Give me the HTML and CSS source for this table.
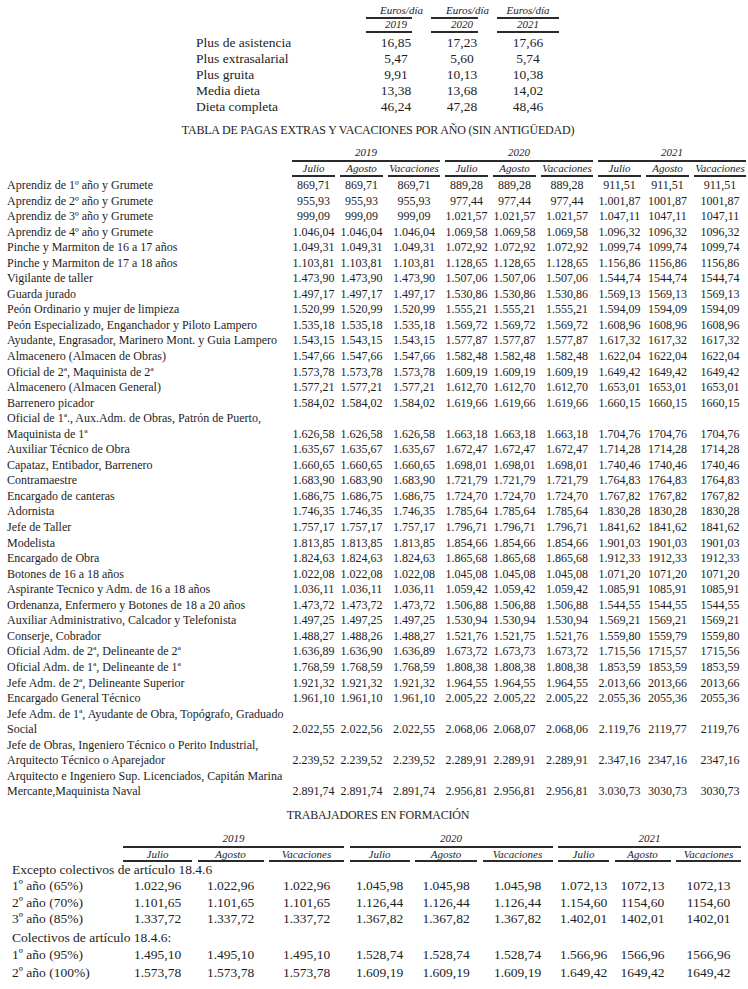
FILE: index.html
```html
<!DOCTYPE html>
<html lang="es">
<head>
<meta charset="utf-8">
<title>Tablas salariales</title>
<link rel="stylesheet" href="styles.css">
</head>
<body>
<div class="page">

  <div class="plus">
    <span></span><span class="hd a c1">Euros/día</span><span class="hd a c2">Euros/día</span><span class="hd a c3">Euros/día</span>
    <span></span><span class="hd b c1">2019</span><span class="hd b c2">2020</span><span class="hd b c3">2021</span>
    <span class="l first">Plus de asistencia</span><span class="c1 first">16,85</span><span class="c2 first">17,23</span><span class="c3 first">17,66</span>
    <span class="l">Plus extrasalarial</span><span class="c1">5,47</span><span class="c2">5,60</span><span class="c3">5,74</span>
    <span class="l">Plus gruita</span><span class="c1">9,91</span><span class="c2">10,13</span><span class="c3">10,38</span>
    <span class="l">Media dieta</span><span class="c1">13,38</span><span class="c2">13,68</span><span class="c3">14,02</span>
    <span class="l">Dieta completa</span><span class="c1">46,24</span><span class="c2">47,28</span><span class="c3">48,46</span>
  </div>

  <h2 class="title">TABLA DE PAGAS EXTRAS Y VACACIONES POR AÑO (SIN ANTIGÜEDAD)</h2>

  <div class="pagas">
    <div class="row yrs"><span></span><span class="yr">2019</span><span class="yr">2020</span><span class="yr">2021</span></div>
    <div class="row subs"><span></span><span class="sh">Julio</span><span class="sh">Agosto</span><span class="sh">Vacaciones</span><span class="sh">Julio</span><span class="sh">Agosto</span><span class="sh">Vacaciones</span><span class="sh">Julio</span><span class="sh">Agosto</span><span class="sh">Vacaciones</span></div>
    <div class="body">
      <div class="row"><span class="l">Aprendiz de 1º año y Grumete</span><span>869,71</span><span>869,71</span><span>869,71</span><span>889,28</span><span>889,28</span><span>889,28</span><span>911,51</span><span>911,51</span><span>911,51</span></div>
      <div class="row"><span class="l">Aprendiz de 2º año y Grumete</span><span>955,93</span><span>955,93</span><span>955,93</span><span>977,44</span><span>977,44</span><span>977,44</span><span>1.001,87</span><span>1001,87</span><span>1001,87</span></div>
      <div class="row"><span class="l">Aprendiz de 3º año y Grumete</span><span>999,09</span><span>999,09</span><span>999,09</span><span>1.021,57</span><span>1.021,57</span><span>1.021,57</span><span>1.047,11</span><span>1047,11</span><span>1047,11</span></div>
      <div class="row"><span class="l">Aprendiz de 4º año y Grumete</span><span>1.046,04</span><span>1.046,04</span><span>1.046,04</span><span>1.069,58</span><span>1.069,58</span><span>1.069,58</span><span>1.096,32</span><span>1096,32</span><span>1096,32</span></div>
      <div class="row"><span class="l">Pinche y Marmiton de 16 a 17 años</span><span>1.049,31</span><span>1.049,31</span><span>1.049,31</span><span>1.072,92</span><span>1.072,92</span><span>1.072,92</span><span>1.099,74</span><span>1099,74</span><span>1099,74</span></div>
      <div class="row"><span class="l">Pinche y Marmiton de 17 a 18 años</span><span>1.103,81</span><span>1.103,81</span><span>1.103,81</span><span>1.128,65</span><span>1.128,65</span><span>1.128,65</span><span>1.156,86</span><span>1156,86</span><span>1156,86</span></div>
      <div class="row"><span class="l">Vigilante de taller</span><span>1.473,90</span><span>1.473,90</span><span>1.473,90</span><span>1.507,06</span><span>1.507,06</span><span>1.507,06</span><span>1.544,74</span><span>1544,74</span><span>1544,74</span></div>
      <div class="row"><span class="l">Guarda jurado</span><span>1.497,17</span><span>1.497,17</span><span>1.497,17</span><span>1.530,86</span><span>1.530,86</span><span>1.530,86</span><span>1.569,13</span><span>1569,13</span><span>1569,13</span></div>
      <div class="row"><span class="l">Peón Ordinario y mujer de limpieza</span><span>1.520,99</span><span>1.520,99</span><span>1.520,99</span><span>1.555,21</span><span>1.555,21</span><span>1.555,21</span><span>1.594,09</span><span>1594,09</span><span>1594,09</span></div>
      <div class="row"><span class="l">Peón Especializado, Enganchador y Piloto Lampero</span><span>1.535,18</span><span>1.535,18</span><span>1.535,18</span><span>1.569,72</span><span>1.569,72</span><span>1.569,72</span><span>1.608,96</span><span>1608,96</span><span>1608,96</span></div>
      <div class="row"><span class="l">Ayudante, Engrasador, Marinero Mont. y Guia Lampero</span><span>1.543,15</span><span>1.543,15</span><span>1.543,15</span><span>1.577,87</span><span>1.577,87</span><span>1.577,87</span><span>1.617,32</span><span>1617,32</span><span>1617,32</span></div>
      <div class="row"><span class="l">Almacenero (Almacen de Obras)</span><span>1.547,66</span><span>1.547,66</span><span>1.547,66</span><span>1.582,48</span><span>1.582,48</span><span>1.582,48</span><span>1.622,04</span><span>1622,04</span><span>1622,04</span></div>
      <div class="row"><span class="l">Oficial de 2ª, Maquinista de 2ª</span><span>1.573,78</span><span>1.573,78</span><span>1.573,78</span><span>1.609,19</span><span>1.609,19</span><span>1.609,19</span><span>1.649,42</span><span>1649,42</span><span>1649,42</span></div>
      <div class="row"><span class="l">Almacenero (Almacen General)</span><span>1.577,21</span><span>1.577,21</span><span>1.577,21</span><span>1.612,70</span><span>1.612,70</span><span>1.612,70</span><span>1.653,01</span><span>1653,01</span><span>1653,01</span></div>
      <div class="row"><span class="l">Barrenero picador</span><span>1.584,02</span><span>1.584,02</span><span>1.584,02</span><span>1.619,66</span><span>1.619,66</span><span>1.619,66</span><span>1.660,15</span><span>1660,15</span><span>1660,15</span></div>
      <div class="row"><span class="l">Oficial de 1ª., Aux.Adm. de Obras, Patrón de Puerto,<br>Maquinista de 1ª</span><span>1.626,58</span><span>1.626,58</span><span>1.626,58</span><span>1.663,18</span><span>1.663,18</span><span>1.663,18</span><span>1.704,76</span><span>1704,76</span><span>1704,76</span></div>
      <div class="row"><span class="l">Auxiliar Técnico de Obra</span><span>1.635,67</span><span>1.635,67</span><span>1.635,67</span><span>1.672,47</span><span>1.672,47</span><span>1.672,47</span><span>1.714,28</span><span>1714,28</span><span>1714,28</span></div>
      <div class="row"><span class="l">Capataz, Entibador, Barrenero</span><span>1.660,65</span><span>1.660,65</span><span>1.660,65</span><span>1.698,01</span><span>1.698,01</span><span>1.698,01</span><span>1.740,46</span><span>1740,46</span><span>1740,46</span></div>
      <div class="row"><span class="l">Contramaestre</span><span>1.683,90</span><span>1.683,90</span><span>1.683,90</span><span>1.721,79</span><span>1.721,79</span><span>1.721,79</span><span>1.764,83</span><span>1764,83</span><span>1764,83</span></div>
      <div class="row"><span class="l">Encargado de canteras</span><span>1.686,75</span><span>1.686,75</span><span>1.686,75</span><span>1.724,70</span><span>1.724,70</span><span>1.724,70</span><span>1.767,82</span><span>1767,82</span><span>1767,82</span></div>
      <div class="row"><span class="l">Adornista</span><span>1.746,35</span><span>1.746,35</span><span>1.746,35</span><span>1.785,64</span><span>1.785,64</span><span>1.785,64</span><span>1.830,28</span><span>1830,28</span><span>1830,28</span></div>
      <div class="row"><span class="l">Jefe de Taller</span><span>1.757,17</span><span>1.757,17</span><span>1.757,17</span><span>1.796,71</span><span>1.796,71</span><span>1.796,71</span><span>1.841,62</span><span>1841,62</span><span>1841,62</span></div>
      <div class="row"><span class="l">Modelista</span><span>1.813,85</span><span>1.813,85</span><span>1.813,85</span><span>1.854,66</span><span>1.854,66</span><span>1.854,66</span><span>1.901,03</span><span>1901,03</span><span>1901,03</span></div>
      <div class="row"><span class="l">Encargado de Obra</span><span>1.824,63</span><span>1.824,63</span><span>1.824,63</span><span>1.865,68</span><span>1.865,68</span><span>1.865,68</span><span>1.912,33</span><span>1912,33</span><span>1912,33</span></div>
      <div class="row"><span class="l">Botones de 16 a 18 años</span><span>1.022,08</span><span>1.022,08</span><span>1.022,08</span><span>1.045,08</span><span>1.045,08</span><span>1.045,08</span><span>1.071,20</span><span>1071,20</span><span>1071,20</span></div>
      <div class="row"><span class="l">Aspirante Tecnico y Adm. de 16 a 18 años</span><span>1.036,11</span><span>1.036,11</span><span>1.036,11</span><span>1.059,42</span><span>1.059,42</span><span>1.059,42</span><span>1.085,91</span><span>1085,91</span><span>1085,91</span></div>
      <div class="row"><span class="l">Ordenanza, Enfermero y Botones de 18 a 20 años</span><span>1.473,72</span><span>1.473,72</span><span>1.473,72</span><span>1.506,88</span><span>1.506,88</span><span>1.506,88</span><span>1.544,55</span><span>1544,55</span><span>1544,55</span></div>
      <div class="row"><span class="l">Auxiliar Administrativo, Calcador y Telefonista</span><span>1.497,25</span><span>1.497,25</span><span>1.497,25</span><span>1.530,94</span><span>1.530,94</span><span>1.530,94</span><span>1.569,21</span><span>1569,21</span><span>1569,21</span></div>
      <div class="row"><span class="l">Conserje, Cobrador</span><span>1.488,27</span><span>1.488,26</span><span>1.488,27</span><span>1.521,76</span><span>1.521,75</span><span>1.521,76</span><span>1.559,80</span><span>1559,79</span><span>1559,80</span></div>
      <div class="row"><span class="l">Oficial Adm. de 2ª, Delineante de 2ª</span><span>1.636,89</span><span>1.636,90</span><span>1.636,89</span><span>1.673,72</span><span>1.673,73</span><span>1.673,72</span><span>1.715,56</span><span>1715,57</span><span>1715,56</span></div>
      <div class="row"><span class="l">Oficial Adm. de 1ª, Delineante de 1ª</span><span>1.768,59</span><span>1.768,59</span><span>1.768,59</span><span>1.808,38</span><span>1.808,38</span><span>1.808,38</span><span>1.853,59</span><span>1853,59</span><span>1853,59</span></div>
      <div class="row"><span class="l">Jefe Adm. de 2ª, Delineante Superior</span><span>1.921,32</span><span>1.921,32</span><span>1.921,32</span><span>1.964,55</span><span>1.964,55</span><span>1.964,55</span><span>2.013,66</span><span>2013,66</span><span>2013,66</span></div>
      <div class="row"><span class="l">Encargado General Técnico</span><span>1.961,10</span><span>1.961,10</span><span>1.961,10</span><span>2.005,22</span><span>2.005,22</span><span>2.005,22</span><span>2.055,36</span><span>2055,36</span><span>2055,36</span></div>
      <div class="row"><span class="l">Jefe Adm. de 1ª, Ayudante de Obra, Topógrafo, Graduado<br>Social</span><span>2.022,55</span><span>2.022,56</span><span>2.022,55</span><span>2.068,06</span><span>2.068,07</span><span>2.068,06</span><span>2.119,76</span><span>2119,77</span><span>2119,76</span></div>
      <div class="row"><span class="l">Jefe de Obras, Ingeniero Técnico o Perito Industrial,<br>Arquitecto Técnico o Aparejador</span><span>2.239,52</span><span>2.239,52</span><span>2.239,52</span><span>2.289,91</span><span>2.289,91</span><span>2.289,91</span><span>2.347,16</span><span>2347,16</span><span>2347,16</span></div>
      <div class="row"><span class="l">Arquitecto e Ingeniero Sup. Licenciados, Capitán Marina<br>Mercante,Maquinista Naval</span><span>2.891,74</span><span>2.891,74</span><span>2.891,74</span><span>2.956,81</span><span>2.956,81</span><span>2.956,81</span><span>3.030,73</span><span>3030,73</span><span>3030,73</span></div>
    </div>
  </div>

  <h2 class="title sub">TRABAJADORES EN FORMACIÓN</h2>

  <div class="form">
    <div class="row yrs"><span></span><span class="yr">2019</span><span class="yr">2020</span><span class="yr">2021</span></div>
    <div class="row subs"><span></span><span class="sh">Julio</span><span class="sh">Agosto</span><span class="sh">Vacaciones</span><span class="sh">Julio</span><span class="sh">Agosto</span><span class="sh">Vacaciones</span><span class="sh">Julio</span><span class="sh">Agosto</span><span class="sh">Vacaciones</span></div>
    <div class="body">
      <div class="row"><span class="grp">Excepto colectivos de artículo 18.4.6</span></div>
      <div class="row"><span class="l">1º año (65%)</span><span>1.022,96</span><span>1.022,96</span><span>1.022,96</span><span>1.045,98</span><span>1.045,98</span><span>1.045,98</span><span>1.072,13</span><span>1072,13</span><span>1072,13</span></div>
      <div class="row"><span class="l">2º año (70%)</span><span>1.101,65</span><span>1.101,65</span><span>1.101,65</span><span>1.126,44</span><span>1.126,44</span><span>1.126,44</span><span>1.154,60</span><span>1154,60</span><span>1154,60</span></div>
      <div class="row"><span class="l">3º año (85%)</span><span>1.337,72</span><span>1.337,72</span><span>1.337,72</span><span>1.367,82</span><span>1.367,82</span><span>1.367,82</span><span>1.402,01</span><span>1402,01</span><span>1402,01</span></div>
      <div class="row gap"><span class="grp">Colectivos de artículo 18.4.6:</span></div>
      <div class="row g2"><span class="l">1º año (95%)</span><span>1.495,10</span><span>1.495,10</span><span>1.495,10</span><span>1.528,74</span><span>1.528,74</span><span>1.528,74</span><span>1.566,96</span><span>1566,96</span><span>1566,96</span></div>
      <div class="row g2"><span class="l">2º año (100%)</span><span>1.573,78</span><span>1.573,78</span><span>1.573,78</span><span>1.609,19</span><span>1.609,19</span><span>1.609,19</span><span>1.649,42</span><span>1649,42</span><span>1649,42</span></div>
    </div>
  </div>

</div>
</body>
</html>
```

FILE: styles.css
```css
* { box-sizing: border-box; }

body {
  margin: 0;
  background: #ffffff;
  color: #1d1d1d;
  font-family: "Liberation Serif", "Times New Roman", serif;
}

.page {
  width: 748px;
  overflow: hidden;
}

/* ---------- top table: pluses ---------- */
.plus {
  display: grid;
  grid-template-columns: 151px 46px 47px 62px;
  column-gap: 19px;
  margin-left: 196px;
  font-size: 13.5px;
  line-height: 16px;
  white-space: nowrap;
}

.plus .hd {
  font-style: italic;
  font-size: 11px;
  border-bottom: 2px solid #2a2a2a;
}

.plus .hd.a {
  line-height: 12px;
  padding-top: 4px;
  padding-bottom: 1px;
}

.plus .hd.b {
  line-height: 10px;
  padding-bottom: 2px;
}

.plus .first { margin-top: 2px; }

.plus .c1 { text-align: center; padding-left: 14px; }
.plus .c2 { text-align: center; padding-left: 15px; }
.plus .c3 { text-align: center; }

/* ---------- titles ---------- */
.title {
  margin: 8px 0 0;
  font-size: 12px;
  line-height: 14px;
  font-weight: normal;
  text-align: center;
  letter-spacing: -0.2px;
  padding-left: 8px;
}

.title.sub { margin-top: 8px; }

/* ---------- main table ---------- */
.pagas {
  margin-top: 9px;
  padding-left: 7px;
  font-size: 12px;
}

.pagas .row {
  display: grid;
  grid-template-columns: 280px 43px 43px 52px 43px 43px 52px 43px 43px 52px;
  column-gap: 5px;
  align-items: end;
  line-height: 15.54px;
  white-space: nowrap;
}

.row > span { text-align: center; }
.row > .l { text-align: left; }

.yrs .yr {
  grid-column: span 3;
  font-style: italic;
  font-size: 11px;
  line-height: 12px;
  padding-bottom: 2px;
  border-bottom: 2px solid #2a2a2a;
}

.subs .sh {
  font-style: italic;
  font-size: 11px;
  line-height: 12px;
  padding-bottom: 1px;
  border-bottom: 2px solid #2a2a2a;
}

.pagas .body { margin-top: 1px; }

/* ---------- trabajadores en formación ---------- */
.form {
  margin-top: 10px;
  padding-left: 12px;
  font-size: 13.5px;
}

.form .row {
  display: grid;
  grid-template-columns: 105.5px 69px 66px 75px 60px 62px 70px 51px 56px 65px;
  column-gap: 5.5px;
  align-items: end;
  line-height: 16.5px;
  white-space: nowrap;
}

.form .row.g2 { line-height: 17.5px; }

.form .subs .sh { padding-bottom: 0; }

.form .grp {
  grid-column: 1 / -1;
  text-align: left;
}

.form .row.gap { margin-top: 2px; }
```
